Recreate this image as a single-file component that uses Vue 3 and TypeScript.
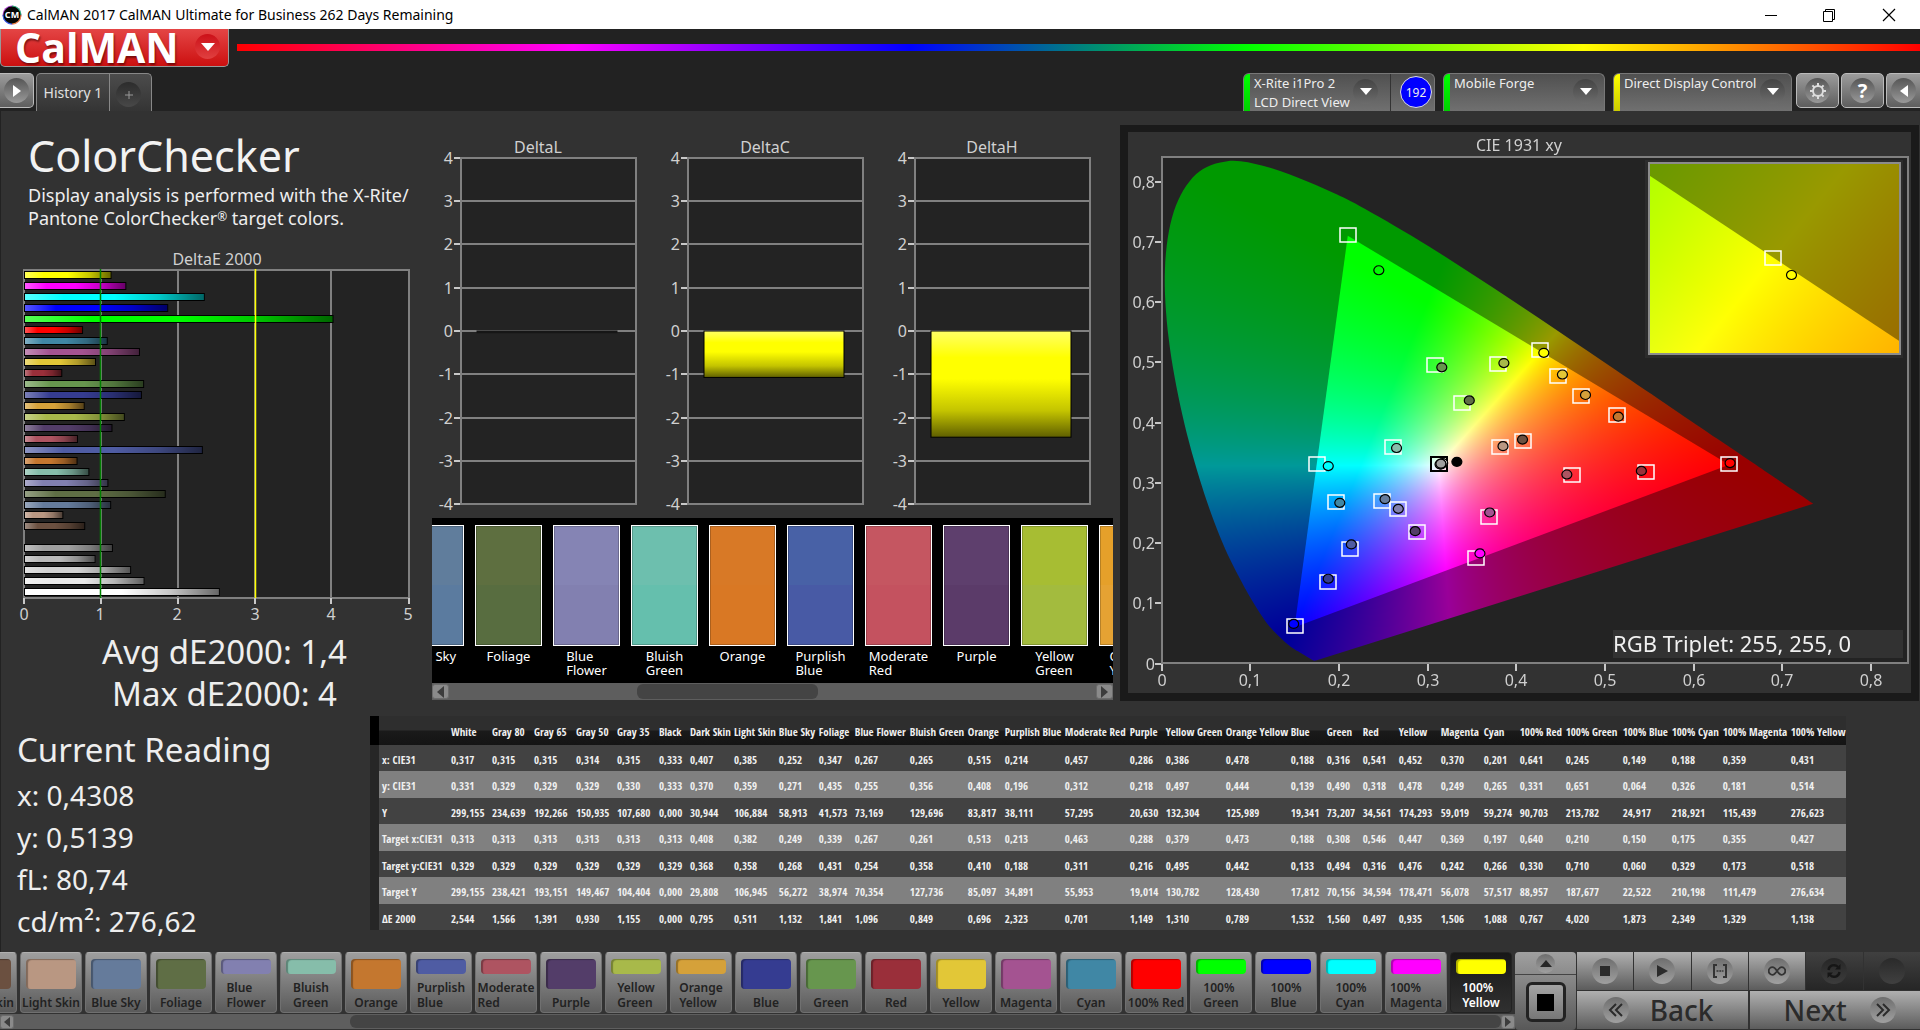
<script setup lang="ts">
import { onMounted, ref } from 'vue'

interface Patch {
  name: string
  label: string[]
  color: string
  width: number
  reading: [string, string, string]
  target: [string, string, string]
  delta: string
}

function patch(
  name: string,
  label: string,
  color: string,
  width: number,
  reading: string,
  target: string,
  delta: string
): Patch {
  return {
    name,
    label: label.split('|'),
    color,
    width,
    reading: reading.split(' ') as [string, string, string],
    target: target.split(' ') as [string, string, string],
    delta
  }
}

const patches: Patch[] = [
  patch('White', 'White', '#ffffff', 41, '0,317 0,331 299,155', '0,313 0,329 299,155', '2,544'),
  patch('Gray 80', 'Gray 80', '#e9e9e9', 42, '0,315 0,329 234,639', '0,313 0,329 238,421', '1,566'),
  patch('Gray 65', 'Gray 65', '#d2d2d2', 42, '0,315 0,329 192,266', '0,313 0,329 193,151', '1,391'),
  patch('Gray 50', 'Gray 50', '#b9b9b9', 41, '0,314 0,329 150,935', '0,313 0,329 149,467', '0,930'),
  patch('Gray 35', 'Gray 35', '#9f9f9f', 42, '0,315 0,330 107,680', '0,313 0,329 104,404', '1,155'),
  patch('Black', 'Black', '#000000', 31, '0,333 0,333 0,000', '0,313 0,329 0,000', '0,000'),
  patch('Dark Skin', 'Dark Skin', '#6b5040', 44, '0,407 0,370 30,944', '0,408 0,368 29,808', '0,795'),
  patch('Light Skin', 'Light Skin', '#b99782', 45, '0,385 0,359 106,884', '0,382 0,358 106,945', '0,511'),
  patch('Blue Sky', 'Blue Sky', '#657b9b', 40, '0,252 0,271 58,913', '0,249 0,268 56,272', '1,132'),
  patch('Foliage', 'Foliage', '#5f6e45', 36, '0,347 0,435 41,573', '0,339 0,431 38,974', '1,841'),
  patch('Blue Flower', 'Blue|Flower', '#8280b0', 55, '0,267 0,255 73,169', '0,267 0,254 70,354', '1,096'),
  patch('Bluish Green', 'Bluish|Green', '#86bdaa', 58, '0,265 0,356 129,696', '0,261 0,358 127,736', '0,849'),
  patch('Orange', 'Orange', '#c4772f', 37, '0,515 0,408 83,817', '0,513 0,410 85,097', '0,696'),
  patch('Purplish Blue', 'Purplish|Blue', '#4f5ca3', 60, '0,214 0,196 38,111', '0,213 0,188 34,891', '2,323'),
  patch('Moderate Red', 'Moderate|Red', '#ae5461', 65, '0,457 0,312 57,295', '0,463 0,311 55,953', '0,701'),
  patch('Purple', 'Purple', '#533d69', 36, '0,286 0,218 20,630', '0,288 0,216 19,014', '1,149'),
  patch('Yellow Green', 'Yellow|Green', '#a8b94a', 60, '0,386 0,497 132,304', '0,379 0,495 130,782', '1,310'),
  patch('Orange Yellow', 'Orange|Yellow', '#d5a13a', 65, '0,478 0,444 125,989', '0,473 0,442 128,430', '0,789'),
  patch('Blue', 'Blue', '#353c91', 36, '0,188 0,139 19,341', '0,188 0,133 17,812', '1,532'),
  patch('Green', 'Green', '#67964e', 36, '0,316 0,490 73,207', '0,308 0,494 70,156', '1,560'),
  patch('Red', 'Red', '#9a2f3a', 36, '0,541 0,318 34,561', '0,546 0,316 34,594', '0,497'),
  patch('Yellow', 'Yellow', '#e2c737', 42, '0,452 0,478 174,293', '0,447 0,476 178,471', '0,935'),
  patch('Magenta', 'Magenta', '#a45391', 43, '0,370 0,249 59,019', '0,369 0,242 56,078', '1,506'),
  patch('Cyan', 'Cyan', '#4087a5', 36, '0,201 0,265 59,274', '0,197 0,266 57,517', '1,088'),
  patch('100% Red', '100% Red', '#ff0000', 46, '0,641 0,331 90,703', '0,640 0,330 88,957', '0,767'),
  patch('100% Green', '100%|Green', '#00ff00', 57, '0,245 0,651 213,782', '0,210 0,710 187,677', '4,020'),
  patch('100% Blue', '100%|Blue', '#0000ff', 49, '0,149 0,064 24,917', '0,150 0,060 22,522', '1,873'),
  patch('100% Cyan', '100%|Cyan', '#00ffff', 51, '0,188 0,326 218,921', '0,175 0,329 210,198', '2,349'),
  patch('100% Magenta', '100%|Magenta', '#ff00ff', 68, '0,359 0,181 115,439', '0,355 0,173 111,479', '1,329'),
  patch('100% Yellow', '100%|Yellow', '#ffff00', 58, '0,431 0,514 276,623', '0,427 0,518 276,634', '1,138')
]

const num = (s: string) => Number(s.replace(',', '.'))

const tableRows = [
  { label: 'x: CIE31', cells: patches.map((p) => p.reading[0]) },
  { label: 'y: CIE31', cells: patches.map((p) => p.reading[1]) },
  { label: 'Y', cells: patches.map((p) => p.reading[2]) },
  { label: 'Target x:CIE31', cells: patches.map((p) => p.target[0]) },
  { label: 'Target y:CIE31', cells: patches.map((p) => p.target[1]) },
  { label: 'Target Y', cells: patches.map((p) => p.target[2]) },
  { label: 'ΔE 2000', cells: patches.map((p) => p.delta) }
]
const tableWidth = 78 + patches.reduce((sum, p) => sum + p.width, 0)
const pct = (w: number) => `${(w / tableWidth) * 100}%`

const deltaBars = [...patches].reverse().map((p, i) => ({
  color: p.color,
  width: num(p.delta) * 77,
  y: 24 + Math.round(i * 10.93)
}))

const deltaCharts = [
  { title: 'DeltaL', value: -0.04 },
  { title: 'DeltaC', value: -1.08 },
  { title: 'DeltaH', value: -2.47 }
]
const levels = [4, 3, 2, 1, 0, -1, -2, -3, -4]
const levelY = (v: number) => Math.round(195 - v * 43.3)

const swatches = [
  { label: ['Blue Sky'], actual: '#607d9c', target: '#5b7b9f' },
  { label: ['Foliage'], actual: '#5e6f40', target: '#586d40' },
  { label: ['Blue', 'Flower'], actual: '#8584b4', target: '#8280b0' },
  { label: ['Bluish', 'Green'], actual: '#6dbfae', target: '#65bfad' },
  { label: ['Orange'], actual: '#d87926', target: '#d97824' },
  { label: ['Purplish', 'Blue'], actual: '#4861a6', target: '#485aa5' },
  { label: ['Moderate', 'Red'], actual: '#c55661', target: '#c4525f' },
  { label: ['Purple'], actual: '#5e3f6d', target: '#5b3b69' },
  { label: ['Yellow', 'Green'], actual: '#a7bd33', target: '#a3bb3e' },
  { label: ['Orange', 'Yellow'], actual: '#e5a02a', target: '#e5a233' }
]

const stripPatches = patches.slice(6)
const selected = ref('100% Yellow')

/* Chromaticity chart geometry */
const CW = 783
const CH = 561
const cx = (x: number) => 33.5 + x * 887
const cy = (y: number) => 531.5 - y * 602.5
const ticks = [0, 1, 2, 3, 4, 5, 6, 7, 8]
const tickLabel = (t: number) => (t === 0 ? '0' : `0,${t}`)

const markers = patches.map((p) => ({
  tx: Math.round(cx(num(p.target[0]))),
  ty: Math.round(cy(num(p.target[1]))),
  rx: cx(num(p.reading[0])),
  ry: cy(num(p.reading[1])) - 1,
  color: p.color,
  neutral: p.target[0] === '0,313'
}))

const locus: [number, number][] = [
  [0.1741, 0.005], [0.1714, 0.0051], [0.1644, 0.0109], [0.1566, 0.0177], [0.144, 0.0297],
  [0.1241, 0.0578], [0.1096, 0.0868], [0.0913, 0.1327], [0.0687, 0.2007], [0.0454, 0.295],
  [0.0235, 0.4127], [0.0082, 0.5384], [0.0039, 0.6548], [0.0139, 0.7502], [0.0389, 0.812],
  [0.0743, 0.8338], [0.1142, 0.8262], [0.1547, 0.8059], [0.1929, 0.7816], [0.2296, 0.7543],
  [0.3016, 0.6923], [0.3731, 0.6245], [0.4441, 0.5547], [0.5125, 0.4866], [0.5752, 0.4242],
  [0.627, 0.3725], [0.6658, 0.334], [0.6915, 0.3083], [0.719, 0.2809], [0.7347, 0.2653]
]
const gamut: [number, number][] = [[0.64, 0.33], [0.21, 0.71], [0.15, 0.06]]

const chroma = ref<HTMLCanvasElement | null>(null)

type Map2 = (v: number) => number

function colorField(
  w: number,
  h: number,
  level: number,
  toX: Map2,
  toY: Map2
): HTMLCanvasElement {
  const c = document.createElement('canvas')
  c.width = w
  c.height = h
  const g = c.getContext('2d')!
  const img = g.createImageData(w, h)
  for (let j = 0; j < h; j++) {
    for (let i = 0; i < w; i++) {
      const x = toX(i + 0.5)
      const y = Math.max(0.0005, toY(j + 0.5))
      const X = x / y
      const Z = (1 - x - y) / y
      const r = Math.max(0, 3.2406 * X - 1.5372 - 0.4986 * Z)
      const gr = Math.max(0, -0.9689 * X + 1.8758 + 0.0415 * Z)
      const b = Math.max(0, 0.0557 * X - 0.204 + 1.057 * Z)
      const m = Math.max(r, gr, b) || 1
      const o = (j * w + i) * 4
      img.data[o] = (r / m) * level
      img.data[o + 1] = (gr / m) * level
      img.data[o + 2] = (b / m) * level
      img.data[o + 3] = 255
    }
  }
  g.putImageData(img, 0, 0)
  return c
}

function trace(g: CanvasRenderingContext2D, pts: number[][], smooth: boolean) {
  g.beginPath()
  g.moveTo(pts[0][0], pts[0][1])
  for (let i = 0; i < pts.length - 1; i++) {
    const p0 = pts[Math.max(0, i - 1)]
    const p1 = pts[i]
    const p2 = pts[i + 1]
    const p3 = pts[Math.min(pts.length - 1, i + 2)]
    if (smooth) {
      g.bezierCurveTo(
        p1[0] + (p2[0] - p0[0]) / 6, p1[1] + (p2[1] - p0[1]) / 6,
        p2[0] - (p3[0] - p1[0]) / 6, p2[1] - (p3[1] - p1[1]) / 6,
        p2[0], p2[1]
      )
    } else {
      g.lineTo(p2[0], p2[1])
    }
  }
  g.closePath()
}

onMounted(() => {
  const g = chroma.value?.getContext('2d')
  if (!g) return
  const toX: Map2 = (px) => (px - 33.5) / 887
  const toY: Map2 = (py) => (531.5 - py) / 602.5
  const fill = (c: HTMLCanvasElement) => g.createPattern(c, 'no-repeat')!

  g.fillStyle = '#232323'
  g.fillRect(33, 25, 747, 506)
  trace(g, locus.map(([x, y]) => [cx(x), cy(y)]), true)
  g.fillStyle = fill(colorField(CW, CH, 153, toX, toY))
  g.fill()
  trace(g, gamut.map(([x, y]) => [cx(x), cy(y)]), false)
  g.fillStyle = fill(colorField(CW, CH, 255, toX, toY))
  g.fill()

  /* magnified view around the selected target */
  const zx: Map2 = (px) => 0.427 + (px - 644.5) / 4750
  const zy: Map2 = (py) => 0.518 - (py - 126) / 3560
  g.fillStyle = '#2c2c2c'
  g.fillRect(517, 28, 258, 198)
  g.save()
  g.beginPath()
  g.rect(521, 31, 251, 191)
  g.clip()
  g.fillStyle = fill(colorField(CW, CH, 153, zx, zy))
  g.fillRect(521, 31, 251, 191)
  trace(g, gamut.map(([x, y]) => [644.5 + (x - 0.427) * 4750, 126 - (y - 0.518) * 3560]), false)
  g.fillStyle = fill(colorField(CW, CH, 255, zx, zy))
  g.fill()
  g.restore()
})
</script>

<template>
  <div class="app">
    <header class="titlebar">
      <svg class="app-icon" width="20" height="20" viewBox="0 0 20 20">
        <circle cx="10" cy="10" r="9.5" fill="#a4c" />
        <path d="M10 .5A9.500 9.500 0 0 1 19.500 10H10Z" fill="#3c8" />
        <path d="M10 19.500A9.500 9.500 0 0 1 .5 10H10Z" fill="#36e" />
        <path d="M10 19.500A9.500 9.500 0 0 0 19.500 10H10Z" fill="#e84" />
        <circle cx="10" cy="10" r="8.500" fill="#050505" />
        <text x="10" y="13" text-anchor="middle" font-size="9" font-weight="700" fill="#fff">CM</text>
      </svg>
      <span class="app-title">CalMAN 2017 CalMAN Ultimate for Business 262 Days Remaining</span>
      <div class="window-buttons">
        <button type="button" aria-label="Minimize">
          <svg width="14" height="14" viewBox="0 0 14 14"><path d="M1 7.500H13" stroke="#000" /></svg>
        </button>
        <button type="button" aria-label="Restore">
          <svg width="14" height="14" viewBox="0 0 14 14" fill="none" stroke="#000">
            <path d="M1.500 3.500H10.500V13.500H1.500ZM3.500 3.500V1.500H12.500V11.500H10.500" />
          </svg>
        </button>
        <button type="button" aria-label="Close">
          <svg width="14" height="14" viewBox="0 0 14 14"><path d="M1 1L13 13M13 1L1 13" stroke="#000" stroke-width="1.200" /></svg>
        </button>
      </div>
    </header>

    <div class="brand-row">
      <button type="button" class="brand">
        <span>CalMAN</span>
        <i class="round red"><svg width="14" height="8" viewBox="0 0 14 8"><path d="M0 0H14L7 8Z" fill="#fff" /></svg></i>
      </button>
      <div class="spectrum"></div>
    </div>

    <nav class="tabs">
      <button type="button" class="chip first" aria-label="Expand">
        <i class="round"><svg width="8" height="14" viewBox="0 0 8 14"><path d="M0 1L8 7L0 13Z" fill="#fff" /></svg></i>
      </button>
      <div class="history">
        <button type="button" class="tab">History 1</button>
        <button type="button" class="plus" aria-label="Add tab">
          <i class="round dim"><svg width="10" height="10" viewBox="0 0 10 10"><path d="M5 1V9M1 5H9" stroke="#999" /></svg></i>
        </button>
      </div>
      <div class="devices">
        <div class="device meter">
          <button type="button">
            <span>X-Rite i1Pro 2<br />LCD Direct View</span>
            <i class="round shade"><svg width="12" height="7" viewBox="0 0 12 7"><path d="M0 0H12L6 7Z" fill="#fff" /></svg></i>
          </button>
          <b class="count">192</b>
        </div>
        <div class="device source">
          <button type="button">
            <span>Mobile Forge</span>
            <i class="round shade"><svg width="12" height="7" viewBox="0 0 12 7"><path d="M0 0H12L6 7Z" fill="#fff" /></svg></i>
          </button>
        </div>
        <div class="device display">
          <button type="button">
            <span>Direct Display Control</span>
            <i class="round shade"><svg width="12" height="7" viewBox="0 0 12 7"><path d="M0 0H12L6 7Z" fill="#fff" /></svg></i>
          </button>
        </div>
        <div class="chips">
          <button type="button" class="chip" aria-label="Settings">
            <i class="round">
              <svg width="18" height="18" viewBox="0 0 18 18" fill="none" stroke="#ddd">
                <circle cx="9" cy="9" r="5" stroke-width="2" />
                <path d="M9 4V1M9 14V17M4 9H1M14 9H17M5.500 5.500L3.400 3.400M12.500 12.500L14.600 14.600M12.500 5.500L14.600 3.400M5.500 12.500L3.400 14.600" stroke-width="2" />
              </svg>
            </i>
          </button>
          <button type="button" class="chip" aria-label="Help"><i class="round help">?</i></button>
          <button type="button" class="chip last" aria-label="Collapse">
            <i class="round"><svg width="8" height="14" viewBox="0 0 8 14"><path d="M8 1L0 7L8 13Z" fill="#fff" /></svg></i>
          </button>
        </div>
      </div>
    </nav>

    <main class="workspace">
      <div class="charts">
        <section class="summary">
          <h1>ColorChecker</h1>
          <p class="intro">Display analysis is performed with the X-Rite/<br />Pantone ColorChecker<span class="reg">®</span> target colors.</p>
          <svg class="plot" viewBox="0 0 431 380">
            <defs>
              <linearGradient id="barShade">
                <stop offset="0" stop-color="#fff" stop-opacity=".35" />
                <stop offset=".22" stop-color="#fff" stop-opacity="0" />
                <stop offset=".5" stop-color="#000" stop-opacity="0" />
                <stop offset=".75" stop-color="#000" stop-opacity=".22" />
                <stop offset="1" stop-color="#000" stop-opacity=".6" />
              </linearGradient>
            </defs>
            <text x="216" y="15" text-anchor="middle">DeltaE 2000</text>
            <rect x="23" y="20" width="385" height="328" fill="#232323" />
            <path d="M100 20V348M177 20V348M254 20V348M330 20V348" stroke="#808080" stroke-width="2" />
            <rect x="23" y="20" width="385" height="328" fill="none" stroke="#808080" stroke-width="2" />
            <g v-for="(bar, i) in deltaBars" :key="i">
              <template v-if="bar.width > 0">
                <rect x="23.500" :y="bar.y - 2.5" :width="bar.width - 1" height="7" :fill="bar.color" />
                <rect x="23.500" :y="bar.y - 2.5" :width="bar.width - 1" height="7" fill="url(#barShade)" stroke="#000" />
              </template>
            </g>
            <path d="M99.500 19V348" stroke="#008000" stroke-width="1.500" />
            <path d="M254.500 19V348" stroke="#ffff00" stroke-width="1.500" />
            <path d="M23 348V354M100 348V354M177 348V354M254 348V354M330 348V354M408 348V354" stroke="#c8c8c8" stroke-width="2" />
            <g text-anchor="middle">
              <text x="23" y="370">0</text>
              <text x="99" y="370">1</text>
              <text x="176" y="370">2</text>
              <text x="254" y="370">3</text>
              <text x="330" y="370">4</text>
              <text x="407" y="370">5</text>
            </g>
          </svg>
          <div class="totals">
            <div>Avg dE2000: 1,4</div>
            <div>Max dE2000: 4</div>
          </div>
        </section>

        <section class="middle">
          <div class="delta-row">
            <svg v-for="chart in deltaCharts" :key="chart.title" class="plot" viewBox="0 0 227 382">
              <defs>
                <linearGradient :id="'fall' + chart.title" x1="0" y1="0" x2="0" y2="1">
                  <stop offset="0" stop-color="#ffff66" />
                  <stop offset=".25" stop-color="#ffff00" />
                  <stop offset=".45" stop-color="#ffff00" />
                  <stop offset=".75" stop-color="#c4c400" />
                  <stop offset="1" stop-color="#5f5f00" />
                </linearGradient>
              </defs>
              <text x="106" y="17" text-anchor="middle">{{ chart.title }}</text>
              <rect x="29" y="22" width="175" height="346" fill="#232323" />
              <g v-for="v in levels" :key="v">
                <path :d="`M29 ${levelY(v)}H204`" stroke="#808080" stroke-width="2" />
                <path :d="`M22 ${levelY(v)}H29`" stroke="#c8c8c8" stroke-width="2" />
                <text x="21" :y="levelY(v) + 6" text-anchor="end">{{ v }}</text>
              </g>
              <path d="M29 21V369M204 21V369" stroke="#808080" stroke-width="2" />
              <rect
                x="45"
                y="195"
                width="140"
                :height="Math.abs(chart.value) * 43"
                :fill="chart.value > -0.1 ? '#161616' : `url(#fall${chart.title})`"
                :stroke="chart.value > -0.1 ? '#161616' : '#000'"
              />
            </svg>
          </div>
          <div class="swatch-box">
            <div class="swatches">
              <div v-for="(s, i) in swatches" :key="i" class="swatch">
                <div class="tile" :style="{ background: `linear-gradient(${s.actual} 50%, ${s.target} 50%)` }"></div>
                <div class="swatch-label"><div v-for="l in s.label" :key="l">{{ l }}</div></div>
              </div>
            </div>
            <div class="scroll">
              <button type="button" class="scroll-btn" aria-label="Scroll left"><svg width="7" height="12" viewBox="0 0 7 12"><path d="M7 0L0 6L7 12Z" fill="#3c3c3c" /></svg></button>
              <div class="scroll-track"><div class="thumb middle-thumb"></div></div>
              <button type="button" class="scroll-btn" aria-label="Scroll right"><svg width="7" height="12" viewBox="0 0 7 12"><path d="M0 0L7 6L0 12Z" fill="#3c3c3c" /></svg></button>
            </div>
          </div>
        </section>

        <section class="cie">
          <div class="cie-stack">
            <canvas ref="chroma" :width="CW" :height="CH"></canvas>
            <svg class="plot" :viewBox="`0 0 ${CW} ${CH}`">
              <text x="391" y="19" text-anchor="middle">CIE 1931 xy</text>
              <rect x="34" y="25" width="746" height="506" fill="none" stroke="#808080" stroke-width="2" />
              <g v-for="t in ticks" :key="t">
                <path :d="`M27 ${Math.round(cy(t / 10))}H33M${Math.round(cx(t / 10))} 532V539`" stroke="#c8c8c8" stroke-width="2" />
                <text x="27" :y="Math.round(cy(t / 10)) + 6" text-anchor="end">{{ tickLabel(t) }}</text>
                <text :x="Math.round(cx(t / 10))" y="554" text-anchor="middle">{{ tickLabel(t) }}</text>
              </g>
              <g v-for="(m, i) in markers" :key="i">
                <rect :x="m.tx - 8" :y="m.ty - 8" width="16" height="14" fill="none" :stroke="m.neutral ? '#000' : '#fff'" :stroke-width="m.neutral ? 2 : 1.5" />
              </g>
              <ellipse v-for="(m, i) in markers" :key="'r' + i" :cx="m.rx" :cy="m.ry" rx="5" ry="4.500" :fill="m.color" stroke="#000" stroke-width="1.200" />
              <rect x="521" y="31" width="251" height="191" fill="none" stroke="#8c8c8c" stroke-width="2" />
              <rect x="637" y="119" width="16" height="14" fill="none" stroke="#fff" stroke-width="1.500" />
              <ellipse cx="663.500" cy="143" rx="5" ry="4.500" fill="#ffff00" stroke="#000" stroke-width="1.200" />
              <rect x="485" y="498" width="290" height="28" fill="#323232" />
              <text class="triplet" x="485" y="520">RGB Triplet: 255, 255, 0</text>
            </svg>
          </div>
        </section>
      </div>

      <div class="lower">
        <section class="reading">
          <h2>Current Reading</h2>
          <div>x: 0,4308</div>
          <div>y: 0,5139</div>
          <div>fL: 80,74</div>
          <div>cd/m²: 276,62</div>
        </section>
        <div class="table-wrap">
          <table>
            <colgroup>
              <col :style="{ width: pct(9) }" />
              <col :style="{ width: pct(69) }" />
              <col v-for="p in patches" :key="p.name" :style="{ width: pct(p.width) }" />
            </colgroup>
            <thead>
              <tr>
                <td class="grip"></td>
                <td></td>
                <th v-for="p in patches" :key="p.name" scope="col">{{ p.name }}</th>
              </tr>
            </thead>
            <tbody>
              <tr v-for="row in tableRows" :key="row.label">
                <td class="grip"></td>
                <th scope="row">{{ row.label }}</th>
                <td v-for="(c, i) in row.cells" :key="i">{{ c }}</td>
              </tr>
            </tbody>
          </table>
        </div>
      </div>
    </main>

    <footer class="toolbar">
      <div class="strip">
        <div class="patch-list">
          <button
            v-for="p in stripPatches"
            :key="p.name"
            type="button"
            class="patch"
            :class="{ active: p.name === selected, tall: p.label.length === 1 }"
            @click="selected = p.name"
          >
            <span class="patch-color" :style="{ backgroundColor: p.color }"></span>
            <span class="patch-label"><span v-for="l in p.label" :key="l">{{ l }}</span></span>
          </button>
        </div>
        <div class="scroll">
          <button type="button" class="scroll-btn" aria-label="Scroll left"><svg width="6" height="10" viewBox="0 0 6 10"><path d="M6 0L0 5L6 10Z" fill="#3c3c3c" /></svg></button>
          <div class="scroll-track"><div class="thumb strip-thumb"></div></div>
          <button type="button" class="scroll-btn" aria-label="Scroll right"><svg width="6" height="10" viewBox="0 0 6 10"><path d="M0 0L6 5L0 10Z" fill="#3c3c3c" /></svg></button>
        </div>
      </div>
      <div class="pattern">
        <button type="button" class="up" aria-label="Pattern options"><i class="knob small"><svg width="12" height="7" viewBox="0 0 12 7"><path d="M0 7H12L6 0Z" fill="#262626" /></svg></i></button>
        <button type="button" class="window-size" aria-label="Pattern window"><i></i></button>
      </div>
      <div class="controls">
        <div class="transport">
          <button type="button" aria-label="Stop"><i class="knob"><svg width="12" height="12" viewBox="0 0 12 12"><path d="M1 1H11V11H1Z" fill="#2b2b2b" /></svg></i></button>
          <button type="button" aria-label="Play"><i class="knob"><svg width="12" height="14" viewBox="0 0 12 14"><path d="M1 1L12 7L1 13Z" fill="#2b2b2b" /></svg></i></button>
          <button type="button" aria-label="Read series">
            <i class="knob">
              <svg width="16" height="14" viewBox="0 0 16 14" fill="none" stroke="#333" stroke-width="2">
                <path d="M5 1H2V13H5M11 1H14V13H11" /><path d="M4.500 7H11.500" stroke-width="1.500" stroke-dasharray="2 .8" />
              </svg>
            </i>
          </button>
          <button type="button" aria-label="Read continuously">
            <i class="knob">
              <svg width="18" height="10" viewBox="0 0 18 10" fill="none" stroke="#333" stroke-width="1.800">
                <path d="M9 5C7 2 6 1.200 4.500 1.200A3.800 3.800 0 0 0 4.500 8.800C6 8.800 7 8 9 5S12 1.200 13.500 1.200A3.800 3.800 0 0 1 13.500 8.800C12 8.800 11 8 9 5Z" />
              </svg>
            </i>
          </button>
          <button type="button" class="off" aria-label="Repeat">
            <i class="knob">
              <svg width="16" height="16" viewBox="0 0 16 16" fill="none" stroke="#161616" stroke-width="2.400">
                <path d="M2.500 7A5.500 5.500 0 0 1 12 4M13.500 9A5.500 5.500 0 0 1 4 12" />
                <path d="M14.500 1V6.500H9ZM1.500 15V9.500H7Z" fill="#161616" stroke="none" />
              </svg>
            </i>
          </button>
          <button type="button" class="off" aria-label="Record"><i class="knob blank"></i></button>
        </div>
        <div class="steps">
          <button type="button" class="back">
            <i class="knob"><svg width="16" height="14" viewBox="0 0 16 14" fill="none" stroke="#2b2b2b" stroke-width="2"><path d="M8 1L2 7L8 13M14 1L8 7L14 13" /></svg></i>
            <span>Back</span>
          </button>
          <button type="button" class="next">
            <span>Next</span>
            <i class="knob"><svg width="16" height="14" viewBox="0 0 16 14" fill="none" stroke="#2b2b2b" stroke-width="2"><path d="M2 1L8 7L2 13M8 1L14 7L8 13" /></svg></i>
          </button>
        </div>
      </div>
    </footer>
  </div>
</template>

<style>
body {
  margin: 0;
  background: #222;
}
</style>

<style scoped>
.app {
  display: flex;
  flex-direction: column;
  min-height: 100vh;
  overflow: hidden;
  background: #222;
  color: #eee;
  font-family: "Noto Sans", "Open Sans", sans-serif;
  font-size: 14px;
}
.app *,
.app *::before {
  box-sizing: border-box;
}
button {
  margin: 0;
  padding: 0;
  border: 0;
  background: none;
  color: inherit;
  font: inherit;
  cursor: pointer;
}
i {
  font-style: normal;
}
svg {
  display: block;
  flex: none;
}

/* Title bar */
.titlebar {
  display: flex;
  align-items: center;
  height: 29px;
  padding-left: 2px;
  background: #fff;
  color: #000;
}
.app-title {
  flex: 1;
  margin-left: 5px;
  white-space: nowrap;
}
.window-buttons {
  display: flex;
}
.window-buttons button {
  display: grid;
  place-items: center;
  width: 58px;
  height: 29px;
}
.window-buttons button:last-child {
  width: 62px;
}

/* Brand */
.brand-row {
  display: flex;
  height: 44px;
}
.brand {
  display: flex;
  align-items: center;
  justify-content: space-between;
  width: 229px;
  height: 38px;
  padding: 0 8px 2px 14px;
  border: 1px solid #999;
  border-top: 0;
  border-radius: 0 0 5px 5px;
  background: linear-gradient(#e44545, #cc1010);
  color: #fff;
  font-family: "Open Sans", sans-serif;
  font-size: 41px;
  font-weight: 700;
  line-height: 32px;
  text-shadow: 1px 2px 2px rgba(60, 0, 0, 0.6);
}
.round {
  display: grid;
  place-items: center;
  flex: none;
  width: 25px;
  height: 25px;
  border-radius: 50%;
  background: linear-gradient(#555, #999);
}
.round.red {
  background: linear-gradient(#cc1018, #e04040);
}
.round.dim {
  background: linear-gradient(#2c2c2c, #484848);
}
.round.shade {
  background: linear-gradient(#444, #6c6c6c);
}
.spectrum {
  flex: 1;
  height: 7px;
  margin: 15px 0 0 8px;
  background: linear-gradient(90deg, #f00, #f0f 20%, #00f 40%, #0f0 60%, #ff0 80%, #f00);
}

/* Tabs */
.tabs {
  display: flex;
  height: 38px;
}
.chip {
  display: grid;
  place-items: center;
  width: 43px;
  height: 35px;
  border: 1px solid #bbb;
  border-radius: 5px;
  background: linear-gradient(#9c9c9c, #5e5e5e);
}
.chip.first {
  width: 34px;
  border-left: 0;
  border-radius: 0 5px 5px 0;
}
.chip.last {
  width: 34px;
  border-right: 0;
  border-radius: 5px 0 0 5px;
}
.history {
  display: flex;
  width: 116px;
  margin-left: 2px;
  border: 1px solid #888;
  border-bottom: 0;
  border-radius: 5px 5px 0 0;
  background: linear-gradient(#4c4c4c, #343434);
}
.tab {
  width: 73px;
  border-right: 1px solid #888;
  color: #e0e0e0;
}
.plus {
  display: grid;
  flex: 1;
  justify-items: start;
  align-items: center;
  padding: 4px 0 0 6px;
}
.devices {
  display: flex;
  gap: 8px;
  margin-left: auto;
}
.device {
  display: flex;
  height: 38px;
  overflow: hidden;
  border: 1px solid #777;
  border-bottom: 0;
  border-radius: 6px 6px 0 0;
  background: linear-gradient(#505050, #707070);
  font-size: 13px;
  line-height: 19px;
}
.device::before {
  content: "";
  flex: none;
  width: 6px;
  background: linear-gradient(#0f0, #00d000);
}
.device.display::before {
  background: linear-gradient(#ff0, #cccc00);
}
.device button {
  display: flex;
  flex: 1;
  align-items: flex-start;
  justify-content: space-between;
  padding: 0 6px 0 4px;
  text-align: left;
  white-space: nowrap;
}
.device .round {
  margin-top: 5px;
}
.device.meter {
  width: 192px;
}
.device.source {
  width: 162px;
}
.device.display {
  width: 179px;
}
.meter button {
  padding-right: 12px;
  border-right: 1px solid #333;
}
.count {
  display: grid;
  place-items: center;
  width: 32px;
  height: 32px;
  margin: 2px 2px 0 9px;
  border: 1px solid #ddd;
  border-radius: 50%;
  background: #00f;
  font-size: 12px;
  font-weight: 400;
}
.chips {
  display: flex;
  gap: 2px;
  margin-left: -4px;
}
.help {
  color: #fff;
  font-size: 20px;
  font-weight: 700;
  line-height: 24px;
}

/* Workspace */
.workspace {
  flex: 1;
  border-left: 1px solid #222;
  background: #323232;
}
.charts {
  display: grid;
  grid-template-columns: minmax(0, 431fr) minmax(0, 688fr) minmax(0, 800fr);
}
.plot {
  width: 100%;
  height: auto;
  font-size: 16px;
  fill: #c8c8c8;
}
.plot text {
  fill: #d0d0d0;
}
.summary {
  padding-top: 16px;
}
h1 {
  margin: 0 0 0 27px;
  color: #f2f2f2;
  font-size: 43px;
  font-weight: 400;
  line-height: 57px;
}
.intro {
  margin: 0 0 20px 27px;
  font-size: 18px;
  line-height: 23px;
  white-space: nowrap;
}
.reg {
  font-size: 12px;
  line-height: 12px;
  vertical-align: 4px;
}
.totals {
  padding: 1px 0 0 16px;
  font-size: 33px;
  line-height: 42px;
  text-align: center;
}
.middle {
  padding: 25px 7px 0 0;
}
.delta-row {
  display: grid;
  grid-template-columns: repeat(3, 1fr);
}
.swatch-box {
  overflow: hidden;
  background: #000;
}
.swatches {
  display: flex;
  gap: 11px;
  height: 165px;
  margin-left: -35px;
  padding-top: 7px;
}
.swatch {
  display: flex;
  flex: none;
  flex-direction: column;
  align-items: center;
  width: 67px;
}
.tile {
  width: 67px;
  height: 121px;
  border: 1px solid #fff;
  box-shadow: inset 0 0 0 1px rgba(0, 0, 0, 0.2);
}
.swatch-label {
  padding-top: 3px;
  color: #fff;
  font-size: 13px;
  line-height: 14px;
  white-space: nowrap;
}
.scroll {
  display: flex;
  height: 17px;
  background: #5e5e5e;
}
.scroll-btn {
  display: grid;
  place-items: center;
  width: 17px;
  height: 15px;
  margin-top: 1px;
  border: 1px solid #6c6c6c;
  border-radius: 3px;
  background: #8a8a8a;
}
.scroll-track {
  flex: 1;
  padding: 1px 0;
}
.thumb {
  height: 15px;
  border-radius: 6px;
  background: #444;
}
.middle-thumb {
  width: 28%;
  margin-left: 29%;
}
.cie {
  margin: 14px 1px 0 0;
  padding: 7px 8px 8px;
  align-self: start;
  background: #1a1a1a;
}
.cie-stack {
  display: grid;
  background: #323232;
}
.cie-stack > * {
  grid-area: 1 / 1;
  width: 100%;
}
.plot .triplet {
  fill: #f0f0f0;
  font-size: 22px;
}

/* Readings and table */
.lower {
  display: flex;
}
.reading {
  width: 369px;
  padding: 11px 0 0 16px;
  font-size: 28px;
  line-height: 42px;
}
h2 {
  margin: 0;
  font-size: 33px;
  font-weight: 400;
  line-height: 48px;
}
.table-wrap {
  flex: 1;
  min-width: 0;
  margin: 1px 74px 0 0;
}
table {
  width: 100%;
  table-layout: fixed;
  border-collapse: collapse;
  font-family: "Noto Sans ExtraCondensed", "Liberation Sans Narrow", "Open Sans Condensed", "Liberation Sans", sans-serif;
  font-size: 11px;
}
th,
td {
  padding: 2px 0 0 3px;
  overflow: visible;
  color: #f0f0f0;
  font-weight: 400;
  text-align: left;
  white-space: nowrap;
}
thead tr {
  height: 29px;
  background: linear-gradient(#2e2e2e 48%, #1a1a1a 52%, #141414);
}
tbody tr {
  height: 26px;
  background: #424242;
}
tbody tr:nth-child(even) {
  height: 27px;
  background: #808080;
}
td.grip {
  background: #262626;
}
thead td.grip {
  background: #000;
}

/* Bottom toolbar */
.toolbar {
  display: flex;
  height: 78px;
  background: #323232;
}
.strip {
  flex: 1;
  min-width: 0;
  overflow: hidden;
}
.patch-list {
  display: flex;
  justify-content: flex-end;
  gap: 3px;
  height: 62px;
  padding: 0 3px 1px 0;
}
.patch {
  display: flex;
  flex: none;
  flex-direction: column;
  align-items: center;
  justify-content: space-between;
  width: 62px;
  padding: 6px 0 2px;
  border: 1px solid #707070;
  border-top-color: #b0b0b0;
  border-radius: 4px;
  background: linear-gradient(#9e9e9e, #5a5a5a);
  color: #222;
  font-size: 12px;
  font-weight: 600;
  line-height: 15px;
}
.patch-color {
  width: 50px;
  height: 15px;
  border-radius: 4px;
  box-shadow: inset 2px 1px 1px rgba(0, 0, 0, 0.3);
}
.tall .patch-color {
  height: 30px;
}
.patch-label {
  display: flex;
  flex-direction: column;
  align-items: flex-start;
  white-space: nowrap;
}
.patch.active {
  border-color: #222;
  background: linear-gradient(#181818, #303030);
  color: #fff;
}
.strip .scroll {
  height: 16px;
  border-bottom: 1px solid #333;
}
.strip .scroll-btn {
  width: 14px;
  height: 14px;
}
.strip .thumb {
  height: 13px;
}
.strip-thumb {
  margin-left: 22.6%;
}
.pattern {
  display: flex;
  flex-direction: column;
  width: 61px;
  margin-right: 1px;
  border-radius: 4px;
  background: linear-gradient(#a0a0a0, #585858);
}
.up {
  display: grid;
  place-items: center;
  height: 23px;
  border-bottom: 1px solid #444;
}
.knob {
  display: grid;
  place-items: center;
  flex: none;
  width: 26px;
  height: 26px;
  border-radius: 50%;
  background: linear-gradient(#6e6e6e, #a0a0a0);
}
.knob.small {
  width: 19px;
  height: 19px;
}
.window-size {
  display: grid;
  place-items: center;
  width: 40px;
  height: 40px;
  margin: 7px auto 0;
  border: 3px solid #222;
  border-radius: 6px;
  background: linear-gradient(#a4a4a4, #777);
}
.window-size i {
  width: 17px;
  height: 17px;
  background: #000;
}
.controls {
  display: flex;
  flex-direction: column;
  gap: 1px;
  width: 343px;
}
.transport {
  display: grid;
  grid-template-columns: repeat(6, 1fr);
  gap: 1px;
  height: 38px;
}
.transport button,
.steps button {
  display: grid;
  place-items: center;
  background: linear-gradient(#b0b0b0, #5c5c5c);
}
.transport button.off {
  background: linear-gradient(#404040, #262626);
}
.off .knob {
  background: linear-gradient(#262626, #3c3c3c);
}
.off .knob.blank {
  background: linear-gradient(#2a2a2a, #404040);
}
.steps {
  display: grid;
  grid-template-columns: 1fr 1fr;
  gap: 2px;
  height: 38px;
}
.steps button {
  display: flex;
  align-items: center;
  justify-content: space-between;
  padding: 0 34px 0 26px;
  color: #2b2b2b;
  font-size: 28px;
  font-weight: 500;
  line-height: 38px;
}
.steps .next {
  padding: 0 24px 0 34px;
}
</style>
